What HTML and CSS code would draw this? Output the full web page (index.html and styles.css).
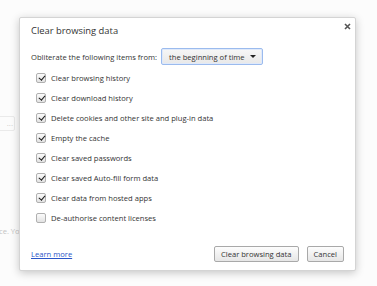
FILE: index.html
```html
<!DOCTYPE html>
<html lang="en">
<head>
<meta charset="UTF-8">
<title>Clear browsing data</title>
<link rel="stylesheet" href="styles.css">
</head>
<body>
<div class="page">
    <div class="bg-input">...</div>
    <div class="bg-text">ce. Yo</div>
</div>
<div class="dialog">
    <svg class="close" width="7" height="7" viewBox="0 0 7 7">
        <path d="M1 1 L6 6 M6 1 L1 6" stroke="#555" stroke-width="1.6" fill="none"/>
    </svg>
    <h1>Clear browsing data</h1>
    <div class="from-row">
        <span>Obliterate the following items from:</span>
        <div class="select">the beginning of time <span class="arrow"></span></div>
    </div>
    <div class="items">
        <label class="item"><span class="box checked"></span>Clear browsing history</label>
        <label class="item"><span class="box checked"></span>Clear download history</label>
        <label class="item"><span class="box checked"></span>Delete cookies and other site and plug-in data</label>
        <label class="item"><span class="box checked"></span>Empty the cache</label>
        <label class="item"><span class="box checked"></span>Clear saved passwords</label>
        <label class="item"><span class="box checked"></span>Clear saved Auto-fill form data</label>
        <label class="item"><span class="box checked"></span>Clear data from hosted apps</label>
        <label class="item"><span class="box"></span>De-authorise content licenses</label>
    </div>
    <div class="footer">
        <a href="#">Learn more</a>
        <div class="buttons">
            <button>Clear browsing data</button>
            <button>Cancel</button>
        </div>
    </div>
</div>
</body>
</html>
```

FILE: styles.css
```css
body {
    margin: 0;
    width: 377px;
    height: 286px;
    overflow: hidden;
    background-color: #fcfcfc;
    font-family: "Open Sans", Arial, sans-serif;
    font-size: 7.6px;
    color: #333;
    position: relative;
}
.page {
    position: absolute;
    left: 0;
    top: 0;
    width: 377px;
    height: 286px;
}
.bg-input {
    position: absolute;
    left: -20px;
    top: 116px;
    width: 32px;
    height: 13px;
    border: 1px solid #eaeaea;
    border-radius: 2px;
    color: #ccc;
    font-size: 8px;
    line-height: 12px;
    text-align: right;
    padding-right: 1px;
}
.bg-text {
    position: absolute;
    left: -1px;
    top: 226px;
    color: #c4c4c4;
    font-size: 7.6px;
    white-space: nowrap;
}
.dialog {
    position: absolute;
    left: 19px;
    top: 17px;
    width: 337px;
    height: 254px;
    box-sizing: border-box;
    background-color: #fff;
    border: 1px solid #d4d4d4;
    border-radius: 2px;
    box-shadow: 0 2px 9px rgba(0, 0, 0, 0.22);
    padding: 0 11px;
}
.close {
    position: absolute;
    left: 324px;
    top: 5px;
}
h1 {
    margin: 6px 0 0 0;
    font-size: 9.4px;
    font-weight: normal;
    color: #333;
    line-height: 14px;
    height: 14px;
}
.from-row {
    display: flex;
    align-items: center;
    height: 17px;
    margin-top: 10px;
    gap: 4px;
    white-space: nowrap;
}
.select {
    display: flex;
    align-items: center;
    justify-content: space-between;
    box-sizing: border-box;
    width: 102px;
    height: 17px;
    padding: 0 6px 0 7px;
    border: 1px solid #9bbbee;
    border-radius: 2px;
    background: linear-gradient(#f7f7f7, #e8e8e8);
    box-shadow: inset 0 0 0 1px #dfe9fa;
}
.arrow {
    width: 0;
    height: 0;
    border-left: 3px solid transparent;
    border-right: 3px solid transparent;
    border-top: 3px solid #222;
}
.items {
    display: flex;
    flex-direction: column;
    margin-top: 3px;
    padding-left: 5px;
}
.item {
    display: flex;
    align-items: center;
    height: 20px;
    gap: 5px;
    white-space: nowrap;
}
.box {
    box-sizing: border-box;
    width: 10px;
    height: 10px;
    border: 1px solid #b0b0b0;
    border-radius: 2px;
    background: linear-gradient(#fbfbfb, #e2e2e2);
    position: relative;
}
.box.checked::after {
    content: "";
    position: absolute;
    left: 2.5px;
    top: 0px;
    width: 2.5px;
    height: 5px;
    border-right: 1.6px solid #1a1a1a;
    border-bottom: 1.6px solid #1a1a1a;
    transform: rotate(40deg);
}
.footer {
    display: flex;
    justify-content: space-between;
    align-items: center;
    height: 16px;
    margin-top: 18px;
}
.footer a {
    color: #2a55c8;
    text-decoration: underline;
}
.buttons {
    display: flex;
    gap: 8px;
}
button {
    font-family: "Open Sans", Arial, sans-serif;
    font-size: 7.6px;
    color: #333;
    height: 16px;
    padding: 0 6px;
    border: 1px solid #a9a9a9;
    border-radius: 2px;
    background: linear-gradient(#fdfdfd, #e6e6e6);
    line-height: 13px;
}
```
